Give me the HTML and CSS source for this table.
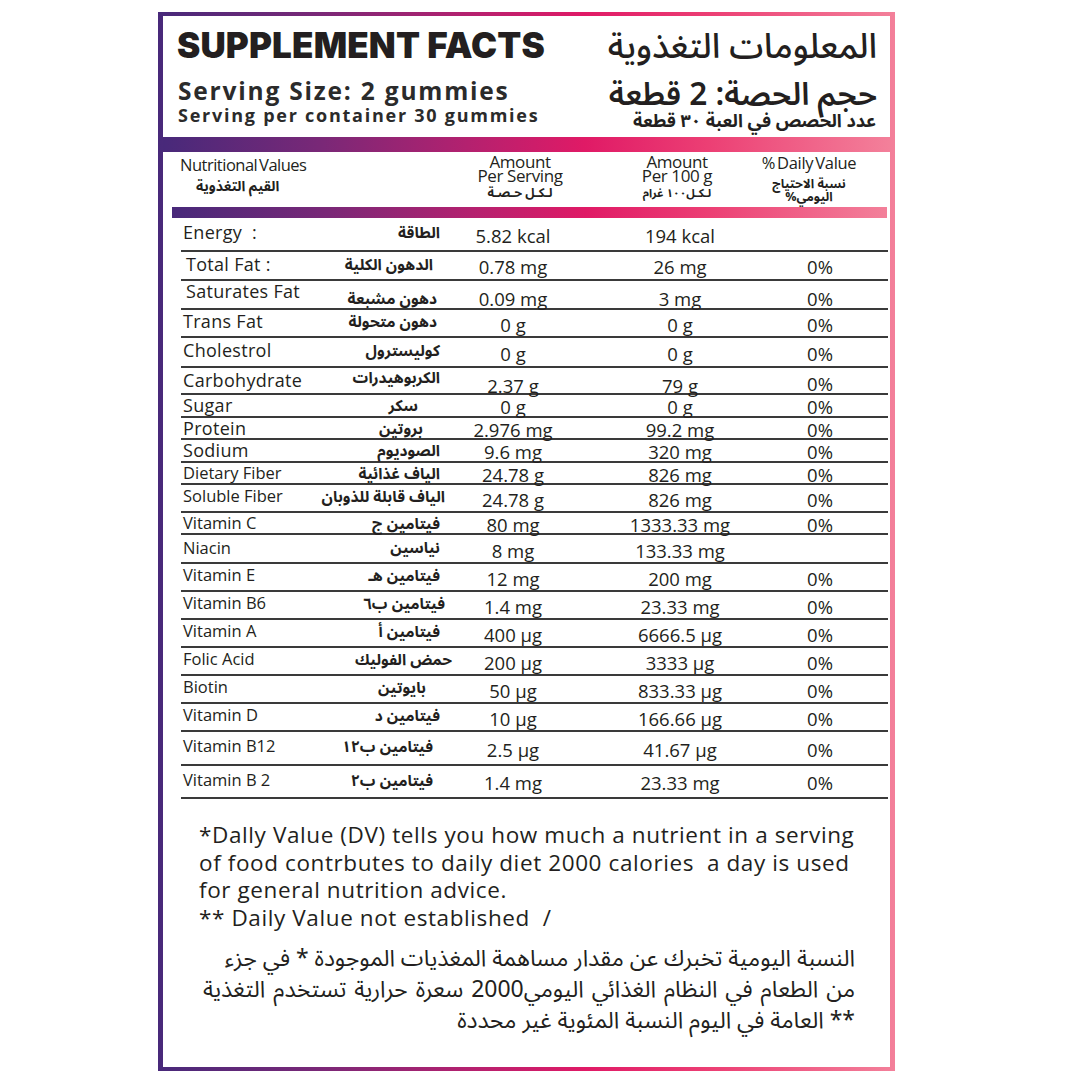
FILE: index.html
```html
<!DOCTYPE html>
<html lang="en">
<head>
<meta charset="utf-8">
<title>Supplement Facts</title>
<link rel="stylesheet" href="styles.css">
</head>
<body>
<div class="label">
  <div class="sheet">
    <header class="top">
      <div class="top-en">
        <h1 class="title">SUPPLEMENT FACTS</h1>
        <p class="serving">Serving Size: 2 gummies</p>
        <p class="per">Serving per container 30 gummies</p>
      </div>
      <div class="top-ar" dir="rtl" lang="ar">
        <p class="title-ar">المعلومات التغذوية</p>
        <p class="serving-ar">حجم الحصة: 2 قطعة</p>
        <p class="per-ar">عدد الحصص في العبة ٣٠ قطعة</p>
      </div>
    </header>
    <div class="bar bar-full"></div>
    <div class="thead">
      <div class="th th-name">
        <span class="th-en tight">Nutritional Values</span>
        <span class="th-ar" dir="rtl" lang="ar">القيم التغذوية</span>
      </div>
      <div class="th">
        <span class="th-en amt">Amount</span>
        <span class="th-en amt">Per Serving</span>
        <span class="th-ar" dir="rtl" lang="ar">لـكـل حـصـة</span>
      </div>
      <div class="th">
        <span class="th-en amt">Amount</span>
        <span class="th-en amt">Per 100 g</span>
        <span class="th-ar small" dir="rtl" lang="ar">لـكـل١٠٠ غرام</span>
      </div>
      <div class="th">
        <span class="th-en tight">% Daily Value</span>
        <span class="th-ar stack" dir="rtl" lang="ar">نسبة الاحتياج</span>
        <span class="th-ar stack" dir="rtl" lang="ar">اليومي%</span>
      </div>
    </div>
    <div class="bar bar-inset"></div>
    <div class="tbody">
      <div class="row h34 first"><span class="en wide">Energy&nbsp;&nbsp;:</span><span class="ar" dir="rtl">الطاقة</span><span class="v">5.82 kcal</span><span class="v">194 kcal</span><span class="v"></span></div>
      <div class="row h29"><span class="en wide in">Total Fat :</span><span class="ar pr8" dir="rtl">الدهون الكلية</span><span class="v">0.78 mg</span><span class="v">26 mg</span><span class="v">0%</span></div>
      <div class="row h29"><span class="en wide in up">Saturates Fat</span><span class="ar pr5 down" dir="rtl">دهون مشبعة</span><span class="v down">0.09 mg</span><span class="v down">3 mg</span><span class="v down">0%</span></div>
      <div class="row h28"><span class="en wide">Trans Fat</span><span class="ar pr5" dir="rtl">دهون متحولة</span><span class="v">0 g</span><span class="v">0 g</span><span class="v">0%</span></div>
      <div class="row h30"><span class="en wide">Cholestrol</span><span class="ar" dir="rtl">كوليسترول</span><span class="v">0 g</span><span class="v">0 g</span><span class="v">0%</span></div>
      <div class="row h27"><span class="en wide">Carbohydrate</span><span class="ar up" dir="rtl">الكربوهيدرات</span><span class="v down">2.37 g</span><span class="v down">79 g</span><span class="v">0%</span></div>
      <div class="row h23"><span class="en wide">Sugar</span><span class="ar pr24" dir="rtl">سكر</span><span class="v">0 g</span><span class="v">0 g</span><span class="v">0%</span></div>
      <div class="row h22"><span class="en wide">Protein</span><span class="ar pr18" dir="rtl">بروتين</span><span class="v">2.976 mg</span><span class="v">99.2 mg</span><span class="v">0%</span></div>
      <div class="row h23"><span class="en wide">Sodium</span><span class="ar" dir="rtl">الصوديوم</span><span class="v">9.6 mg</span><span class="v">320 mg</span><span class="v">0%</span></div>
      <div class="row h22"><span class="en">Dietary Fiber</span><span class="ar" dir="rtl">الياف غذائية</span><span class="v">24.78 g</span><span class="v">826 mg</span><span class="v">0%</span></div>
      <div class="row h28"><span class="en">Soluble Fiber</span><span class="ar out3" dir="rtl">الياف قابلة للذوبان</span><span class="v">24.78 g</span><span class="v">826 mg</span><span class="v">0%</span></div>
      <div class="row h22"><span class="en">Vitamin C</span><span class="ar" dir="rtl">فيتامين ج</span><span class="v">80 mg</span><span class="v">1333.33 mg</span><span class="v">0%</span></div>
      <div class="row h29 top-row"><span class="en">Niacin</span><span class="ar" dir="rtl">نياسين</span><span class="v">8 mg</span><span class="v">133.33 mg</span><span class="v"></span></div>
      <div class="row h28"><span class="en">Vitamin E</span><span class="ar" dir="rtl">فيتامين هـ</span><span class="v">12 mg</span><span class="v">200 mg</span><span class="v">0%</span></div>
      <div class="row h28"><span class="en">Vitamin B6</span><span class="ar out3" dir="rtl">فيتامين ب٦</span><span class="v">1.4 mg</span><span class="v">23.33 mg</span><span class="v">0%</span></div>
      <div class="row h28"><span class="en">Vitamin A</span><span class="ar" dir="rtl">فيتامين أ</span><span class="v">400 µg</span><span class="v">6666.5 µg</span><span class="v">0%</span></div>
      <div class="row h28"><span class="en">Folic Acid</span><span class="ar out10" dir="rtl">حمض الفوليك</span><span class="v">200 µg</span><span class="v">3333 µg</span><span class="v">0%</span></div>
      <div class="row h28"><span class="en">Biotin</span><span class="ar pr15" dir="rtl">بايوتين</span><span class="v">50 µg</span><span class="v">833.33 µg</span><span class="v">0%</span></div>
      <div class="row h28"><span class="en">Vitamin D</span><span class="ar" dir="rtl">فيتامين د</span><span class="v">10 µg</span><span class="v">166.66 µg</span><span class="v">0%</span></div>
      <div class="row h34"><span class="en">Vitamin B12</span><span class="ar pr8" dir="rtl">فيتامين ب١٢</span><span class="v">2.5 µg</span><span class="v">41.67 µg</span><span class="v">0%</span></div>
      <div class="row h33"><span class="en">Vitamin B 2</span><span class="ar pr8" dir="rtl">فيتامين ب٢</span><span class="v">1.4 mg</span><span class="v">23.33 mg</span><span class="v">0%</span></div>
    </div>
    <div class="notes">
      <p class="note-en">*Dally Value (DV) tells you how much a nutrient in a serving</p>
      <p class="note-en">of food contrbutes to daily diet 2000 calories&nbsp; a day is used</p>
      <p class="note-en">for general nutrition advice.</p>
      <p class="note-en">** Daily Value not established&nbsp; /</p>
      <div class="note-ar" dir="rtl" lang="ar">
        <p>النسبة اليومية تخبرك عن مقدار مساهمة المغذيات الموجودة * في جزء</p>
        <p class="wider">من الطعام في النظام الغذائي اليومي2000 سعرة حرارية تستخدم التغذية</p>
        <p>** العامة في اليوم النسبة المئوية غير محددة</p>
      </div>
    </div>
  </div>
</div>
</body>
</html>
```

FILE: styles.css
```css
html, body {
  margin: 0;
  padding: 0;
  background: #ffffff;
}

body {
  font-family: "Open Sans", "Noto Sans", sans-serif;
  color: #231f20;
}

p, h1 {
  margin: 0;
}

.label {
  box-sizing: border-box;
  width: 737px;
  height: 1059px;
  margin: 12px 0 0 158px;
  padding: 4px 5px 4px 5px;
  background: linear-gradient(90deg, #48297a 0%, #7a2877 22%, #b4216f 42%, #e01a66 58%, #ec3f74 75%, #f3809a 100%);
}

.sheet {
  height: 100%;
  background: #ffffff;
  display: flex;
  flex-direction: column;
}

/* ---------- header ---------- */
.top {
  box-sizing: border-box;
  height: 121px;
  display: flex;
  justify-content: space-between;
  padding: 12px 13px 0 14px;
}

.title {
  font-family: "Inter", "Liberation Sans", sans-serif;
  font-weight: 900;
  font-size: 35px;
  line-height: 35px;
  letter-spacing: 0.15px;
  color: #231f20;
}

.serving {
  margin-top: 15px;
  font-weight: 700;
  font-size: 24.5px;
  line-height: 26px;
  letter-spacing: 1.8px;
  color: #2b2b2b;
  padding-left: 1px;
  white-space: nowrap;
}

.per {
  font-weight: 700;
  font-size: 18px;
  line-height: 22px;
  letter-spacing: 1.75px;
  color: #2b2b2b;
  padding-left: 1px;
  white-space: nowrap;
}

.top-ar {
  text-align: right;
  font-family: "Noto Sans Arabic", "Noto Naskh Arabic", "DejaVu Sans", sans-serif;
  color: #231f20;
}

.title-ar {
  font-size: 34.5px;
  line-height: 44px;
  font-weight: 500;
  margin-top: -3px;
}

.serving-ar {
  margin-top: 10px;
  font-size: 31.5px;
  line-height: 32px;
  font-weight: 600;
}

.per-ar {
  font-size: 18px;
  line-height: 18px;
  font-weight: 700;
  padding-top: 1px;
  padding-right: 1px;
}

/* ---------- bars ---------- */
.bar {
  background: linear-gradient(90deg, #48297a 0%, #7a2877 22%, #b4216f 42%, #e01a66 58%, #ec3f74 75%, #f3809a 100%);
}

.bar-full {
  height: 15px;
}

.bar-inset {
  height: 11px;
  margin: 0 3px 0 9px;
}

/* ---------- table head ---------- */
.thead {
  box-sizing: border-box;
  height: 55px;
  margin: 0 2px 0 18px;
  display: grid;
  grid-template-columns: 279px 120px 194px 70px;
  align-items: start;
}

.th {
  display: flex;
  flex-direction: column;
  align-items: center;
  padding-top: 2px;
}

.th-name {
  align-items: flex-start;
}

.th-name .th-en {
  margin-top: 2px;
  margin-left: -1px;
}

.th-name .th-ar {
  align-self: flex-start;
  margin-left: 15px;
  margin-top: 5px;
  font-size: 14px;
}

.th-en {
  font-size: 16.5px;
  line-height: 18px;
  white-space: nowrap;
}

.tight {
  letter-spacing: -0.5px;
  word-spacing: -2px;
}

.th:last-child .tight {
  letter-spacing: -0.3px;
}

.amt {
  font-size: 17px;
  line-height: 12px;
  letter-spacing: -0.4px;
  padding-top: 2px;
}

.th-ar {
  font-family: "Noto Sans Arabic", "DejaVu Sans", sans-serif;
  font-size: 12.5px;
  line-height: 16px;
  font-weight: 700;
  white-space: nowrap;
  margin-top: 3px;
}

.th-ar.small {
  font-size: 11.5px;
}

.th-ar.stack {
  text-align: center;
  line-height: 13px;
  margin-top: 0;
}

.th-ar.stack:nth-child(2) {
  margin-top: 6px;
}

/* ---------- rows ---------- */
.tbody {
  margin: 0 2px 0 18px;
}

.row {
  box-sizing: border-box;
  display: grid;
  grid-template-columns: 119px 142px 142px 192px 88px 1fr;
  align-items: center;
  border-bottom: 2px solid #3a3a3a;
  font-size: 18.5px;
  line-height: 20px;
  color: #231f20;
}

.row .en {
  font-size: 16.5px;
  padding: 0 0 4px 2px;
  white-space: nowrap;
}

.row .en.wide {
  font-size: 18px;
  letter-spacing: 0.3px;
}

.row .en.in {
  padding-left: 5px;
}

.row .ar {
  font-family: "Noto Sans Arabic", "Noto Naskh Arabic", "DejaVu Sans", sans-serif;
  font-weight: 700;
  font-size: 15.5px;
  text-align: right;
  padding: 0 2px 2px 0;
  white-space: nowrap;
}

.row .ar.pr5 { padding-right: 5px; }
.row .ar.pr8 { padding-right: 9px; }
.row .ar.pr15 { padding-right: 16px; }
.row .ar.pr18 { padding-right: 19px; }
.row .ar.pr24 { padding-right: 24px; }
.row .ar.out3 { padding-right: 0; margin-right: -3px; }
.row .ar.out10 { padding-right: 0; margin-right: -10px; }

.row .v {
  text-align: center;
  padding-top: 3px;
  white-space: nowrap;
}

.h22 .v,
.h23 .v {
  padding-top: 0;
  padding-bottom: 1px;
}

.row .up {
  padding-top: 0;
  padding-bottom: 8px;
}

.row .down {
  padding-top: 8px;
  padding-bottom: 0;
}

.row.top-row {
  align-items: start;
  padding-top: 3px;
}

.h22 { height: 22px; }
.h23 { height: 23px; }
.h27 { height: 27px; }
.h28 { height: 28px; }
.h29 { height: 29px; }
.h30 { height: 30px; }
.h33 { height: 33px; }
.h34 { height: 34px; }

/* ---------- notes ---------- */
.notes {
  padding: 22px 35px 0 36px;
}

.note-en {
  font-family: "Open Sans", "Noto Sans", sans-serif;
  font-size: 22.5px;
  line-height: 27.5px;
  letter-spacing: 0.6px;
  color: #231f20;
  white-space: nowrap;
}

.note-ar {
  margin-top: 12px;
  font-family: "Noto Sans Arabic", "Noto Naskh Arabic", "DejaVu Sans", sans-serif;
  font-size: 23px;
  line-height: 31px;
  color: #231f20;
  white-space: nowrap;
}

.note-ar .wider {
  word-spacing: 2px;
}
```
